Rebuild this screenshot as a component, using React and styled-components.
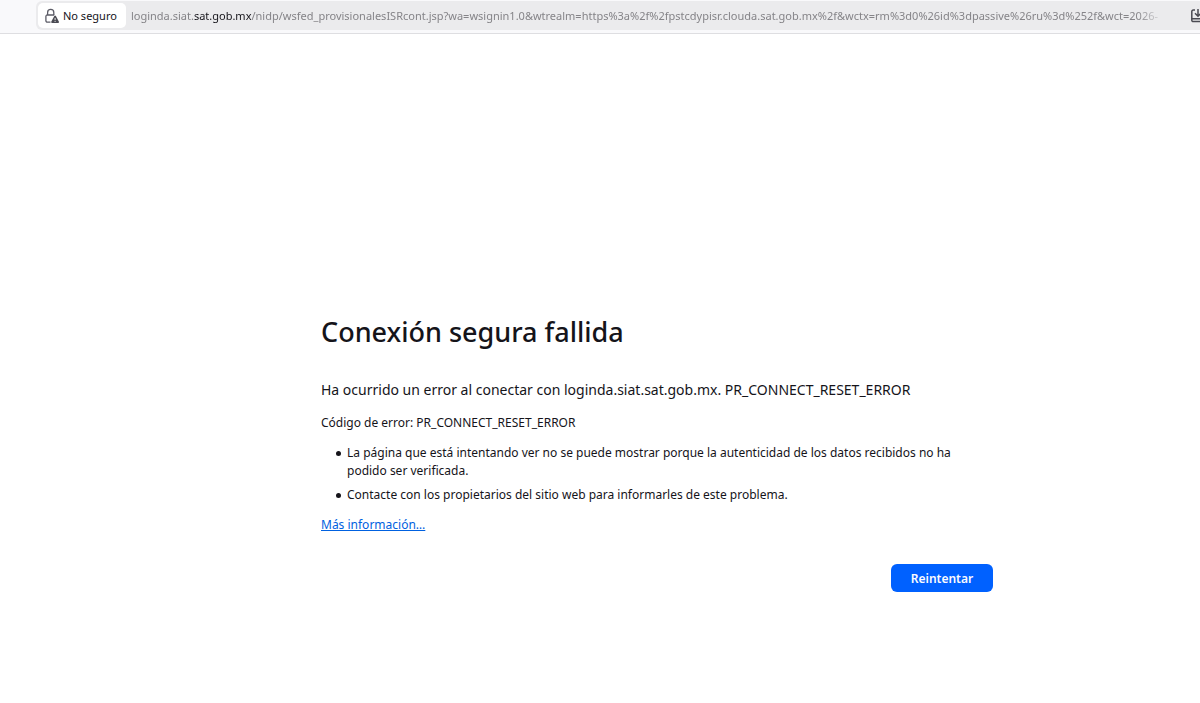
import React from "react";
import styled, { createGlobalStyle } from "styled-components";

const GlobalStyle = createGlobalStyle`
  *, *::before, *::after { box-sizing: border-box; }
  body {
    margin: 0;
    background: #ffffff;
    color: #15141a;
    font-family: "Noto Sans", "Open Sans", sans-serif;
    font-size: 12px;
  }
`;

const Toolbar = styled.header`
  display: flex;
  height: 34px;
  padding: 1px 0 3px 36px;
  background: #f9f9fb;
  border-bottom: 1px solid #dedee1;
`;

const AddressBar = styled.div`
  flex: 1;
  min-width: 0;
  display: flex;
  align-items: center;
  padding-left: 2px;
  background: #ebebed;
  border-radius: 6px 0 0 6px;
  overflow: hidden;
`;

const IdentityButton = styled.button`
  flex: none;
  display: flex;
  align-items: center;
  gap: 4px;
  height: 25px;
  padding: 0 9px 0 7px;
  border: 0;
  border-radius: 5px;
  background: #ffffff;
  color: #15141a;
  font: inherit;
  font-size: 11px;
  white-space: nowrap;
`;

const Url = styled.div`
  flex: 1;
  min-width: 0;
  margin-left: 5px;
  overflow: hidden;
  white-space: nowrap;
  color: #858488;
  font-size: 11px;
  line-height: 20px;
  mask-image: linear-gradient(to left, transparent 16px, #000 44px);
`;

const Domain = styled.span`
  color: #15141a;
`;

const SaveButton = styled.button`
  flex: none;
  display: flex;
  align-items: center;
  width: 19px;
  height: 25px;
  padding: 0 0 0 9px;
  border: 0;
  background: transparent;
  overflow: hidden;

  svg { flex: none; }
`;

const Page = styled.main`
  max-width: 786px;
  margin: 0 auto;
  padding: 276px 0 40px 114px;
`;

const Title = styled.h1`
  margin: 0 0 24px;
  font-size: 27px;
  line-height: 44px;
  font-weight: 500;
`;

const Lead = styled.p`
  margin: 0 0 12px;
  font-size: 14px;
  line-height: 24px;
`;

const Detail = styled.p`
  margin: 0 0 12px;
  line-height: 18px;
`;

const Reasons = styled.ul`
  margin: 0 0 12px;
  padding-left: 15px;
  list-style: none;
`;

const Reason = styled.li`
  display: flex;
  gap: 6px;
  margin-bottom: 6px;
  line-height: 18px;

  &::before {
    content: "";
    flex: none;
    width: 5px;
    height: 5px;
    margin-top: 7px;
    border-radius: 50%;
    background: currentColor;
  }
`;

const MoreLink = styled.a`
  color: #0061e0;
  text-decoration: underline;
`;

const Actions = styled.div`
  display: flex;
  justify-content: flex-end;
  padding-top: 18px;
`;

const PrimaryButton = styled.button`
  width: 102px;
  height: 28px;
  padding: 0;
  border: 0;
  border-radius: 6px;
  background: #0061ff;
  color: #fbfbfe;
  font: inherit;
  font-weight: 600;
`;

function LockWarningIcon() {
  return (
    <svg width="14" height="16" viewBox="0 0 14 16" fill="none" aria-hidden="true">
      <path d="M2.600 7V4.500a3.100 3.100 0 0 1 6.200 0V7" stroke="#5b5b66" strokeWidth="1.300" />
      <path d="M5.500 14.200H2.300A1.400 1.400 0 0 1 .9 12.800V8.400A1.400 1.400 0 0 1 2.300 7H9.200" stroke="#5b5b66" strokeWidth="1.300" />
      <path d="M9.300 7.900a.9.9 0 0 1 1.600 0l2.900 5.700a.9.9 0 0 1-.8 1.300H7.200a.9.9 0 0 1-.8-1.300z" fill="#4a4a52" />
      <path d="M10.100 9.900v2.300M10.100 13v.9" stroke="#fff" strokeWidth=".9" />
    </svg>
  );
}

function SaveIcon() {
  return (
    <svg width="16" height="16" viewBox="0 0 16 16" fill="none" stroke="#4a4a52" strokeWidth="1.500" aria-hidden="true">
      <path d="M5 2H3.200A1.400 1.400 0 0 0 1.800 3.400v7.400h12.400V3.400A1.400 1.400 0 0 0 12.800 2H11" />
      <path d="M1.800 10.500v1.700a1.400 1.400 0 0 0 1.400 1.400h9.600a1.400 1.400 0 0 0 1.400-1.400v-1.700" />
      <path d="M8 1v7M5 5.200l3 3 3-3" />
    </svg>
  );
}

export default function App() {
  return (
    <>
      <GlobalStyle />
      <Toolbar>
        <AddressBar>
          <IdentityButton type="button">
            <LockWarningIcon />
            No seguro
          </IdentityButton>
          <Url>
            loginda.siat.<Domain>sat.gob.mx</Domain>
            /nidp/wsfed_provisionalesISRcont.jsp?wa=wsignin1.0&amp;wtrealm=https%3a%2f%2fpstcdypisr.clouda.sat.gob.mx%2f&amp;wctx=rm%3d0%26id%3dpassive%26ru%3d%252f&amp;wct=2026-
          </Url>
          <SaveButton type="button" aria-label="Guardar">
            <SaveIcon />
          </SaveButton>
        </AddressBar>
      </Toolbar>
      <Page>
        <Title>Conexión segura fallida</Title>
        <Lead>Ha ocurrido un error al conectar con loginda.siat.sat.gob.mx. PR_CONNECT_RESET_ERROR</Lead>
        <Detail>Código de error: PR_CONNECT_RESET_ERROR</Detail>
        <Reasons>
          <Reason>
            La página que está intentando ver no se puede mostrar porque la autenticidad de los datos recibidos no ha
            podido ser verificada.
          </Reason>
          <Reason>Contacte con los propietarios del sitio web para informarles de este problema.</Reason>
        </Reasons>
        <Detail>
          <MoreLink href="#mas-informacion">Más información…</MoreLink>
        </Detail>
        <Actions>
          <PrimaryButton type="button">Reintentar</PrimaryButton>
        </Actions>
      </Page>
    </>
  );
}
